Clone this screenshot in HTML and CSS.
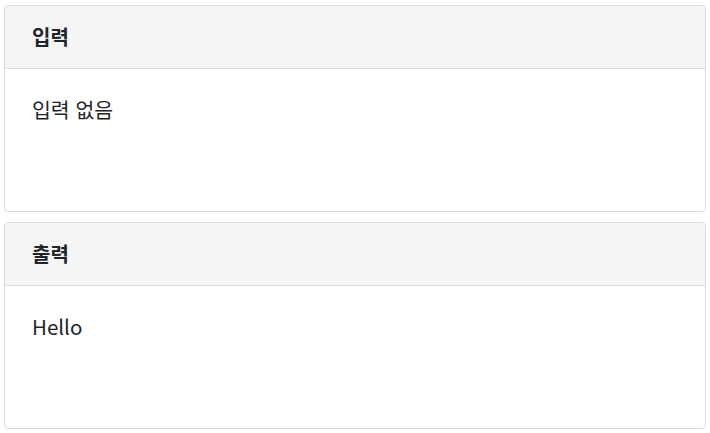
FILE: index.html
```html
<!DOCTYPE html>
<html lang="ko">
<head>
  <meta charset="UTF-8"/>
  <meta name="viewport" content="width=device-width, initial-scale=1.0"/>
  <title>입력 / 출력</title>
  <link rel="stylesheet" href="styles.css">
</head>
<body>
  <div class="page">
    <!-- 입력 -->
    <div class="card">
      <div class="card-header">입력</div>
      <div class="card-body">입력 없음</div>
    </div>

    <!-- 출력 -->
    <div class="card">
      <div class="card-header">출력</div>
      <div class="card-body">Hello</div>
    </div>
  </div>
</body>
</html>
```

FILE: styles.css
```css
body { margin:0; background:#fff; color:#212529;
       font-family:"Noto Sans CJK KR", "Noto Sans", sans-serif }
.page { display:flex; flex-direction:column; gap:10px;
        padding:5px 4px 0 4px }
.card { border:1px solid #dcdcdc; border-radius:4px; background:#fff;
        height:207px; box-sizing:border-box; overflow:hidden }
.card-header { background:#f5f5f5; border-bottom:1px solid #dcdcdc;
               padding:17px 27px; font-size:20px; line-height:28px;
               font-weight:bold }
.card-body { padding:26px 27px; font-size:20.5px; line-height:28px }
```
